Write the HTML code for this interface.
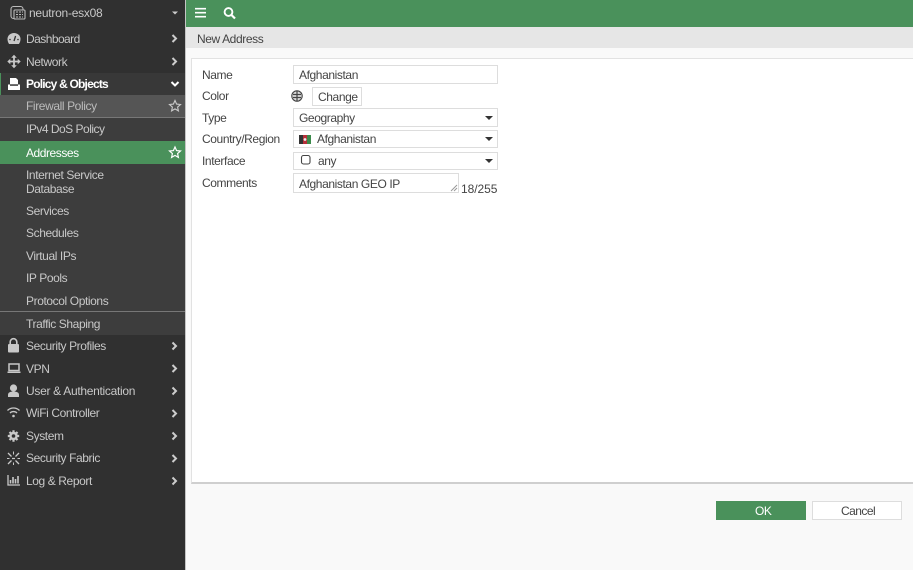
<!DOCTYPE html>
<html><head><meta charset="utf-8">
<style>
html,body{margin:0;padding:0;width:913px;height:570px;overflow:hidden;background:#f9f9f9;font-family:"Liberation Sans",sans-serif;font-size:12px;color:#444}
div,span,svg{position:absolute;box-sizing:border-box}
.t{white-space:nowrap;letter-spacing:-.4px}
#side{left:0;top:0;width:185px;height:570px;background:#303030}
.s{color:#c8c8c8;left:26px}
.b{background:#fff;border:1px solid #ddd;left:293px;width:205px;height:19px}
.l{left:202px;color:#444}
.v{color:#444}
.ar{left:485px;width:0;height:0;border-left:4.5px solid transparent;border-right:4.5px solid transparent;border-top:4.5px solid #333}
</style></head><body>
<div id="side">
<div style="left:0;top:95px;width:185px;height:240px;background:#3d3d3d"></div>
<div style="left:0;top:73px;width:185px;height:22px;background:#383838"></div>
<div style="left:0;top:73px;width:1px;height:22px;background:#4a915b"></div>
<div style="left:0;top:95px;width:185px;height:22px;background:#555"></div>
<div style="left:0;top:117px;width:185px;height:1px;background:#777"></div>
<div style="left:0;top:141px;width:185px;height:23px;background:#4a915b"></div>
<div style="left:0;top:311px;width:185px;height:1px;background:#777"></div>
<div class="t" style="left:29px;top:6px;color:#c8c8c8;line-height:14px;letter-spacing:-.25px">neutron-esx08</div>
<div class="t s" style="top:32px;letter-spacing:-.55px">Dashboard</div>
<div class="t s" style="top:55px">Network</div>
<div class="t s" style="top:77px;color:#fff;font-weight:bold;letter-spacing:-.8px">Policy &amp; Objects</div>
<div class="t s" style="top:99px;color:#bbb">Firewall Policy</div>
<div class="t s" style="top:122px;letter-spacing:-.5px">IPv4 DoS Policy</div>
<div class="t s" style="top:146px;color:#fff;letter-spacing:-.45px">Addresses</div>
<div class="t s" style="top:168px">Internet Service</div>
<div class="t s" style="top:182px">Database</div>
<div class="t s" style="top:204px">Services</div>
<div class="t s" style="top:226px">Schedules</div>
<div class="t s" style="top:249px">Virtual IPs</div>
<div class="t s" style="top:271px">IP Pools</div>
<div class="t s" style="top:294px">Protocol Options</div>
<div class="t s" style="top:317px">Traffic Shaping</div>
<div class="t s" style="top:339px">Security Profiles</div>
<div class="t s" style="top:362px">VPN</div>
<div class="t s" style="top:384px;letter-spacing:-.3px">User &amp; Authentication</div>
<div class="t s" style="top:406px">WiFi Controller</div>
<div class="t s" style="top:429px">System</div>
<div class="t s" style="top:451px">Security Fabric</div>
<div class="t s" style="top:474px">Log &amp; Report</div>
<svg style="left:0;top:0" width="185" height="500" viewBox="0 0 185 500">
<!-- device icon -->
<g fill="none" stroke="#bbb" stroke-width="1.100"><rect x="11" y="6.500" width="12" height="12" rx="2.500"/><rect x="14" y="10" width="11" height="9" rx="1" fill="#303030"/></g>
<path d="M16 12h7M16 14.500h7M16 17h7" stroke="#bbb" stroke-width="1" stroke-dasharray="2 1"/>
<path d="M172 11.500h6l-3 3z" fill="#ccc"/>
<!-- dashboard -->
<path d="M7.500 39a6.500 6 0 0 1 13 0c0 2-.6 3.500-1.600 5H9.100C8.100 42.500 7.500 41 7.500 39z" fill="#c8c8c8"/><path d="M14 41l1.600-5" stroke="#303030" stroke-width="1.300"/><circle cx="10" cy="39.500" r=".8" fill="#303030"/><circle cx="18" cy="39.500" r=".8" fill="#303030"/>
<!-- network -->
<path d="M14 56.500v10M9 61.500h10" stroke="#c8c8c8" stroke-width="1.800"/><path d="M14 54.800l2.800 3h-5.600zM14 68.200l2.800-3h-5.600zM7.300 61.500l3-2.800v5.600zM20.700 61.500l-3-2.800v5.600z" fill="#c8c8c8"/>
<!-- policy -->
<path d="M10 78h6l2 2v4h-8z" fill="#fff"/><path d="M8 84.500h12v5.500H8z" fill="#fff"/><path d="M10 85.300h8" stroke="#383838" stroke-width="1"/>
<!-- lock -->
<rect x="8" y="344" width="11" height="8.500" rx="1" fill="#c8c8c8"/><path d="M10.200 344v-2a3.300 3.300 0 0 1 6.600 0v2" fill="none" stroke="#c8c8c8" stroke-width="1.600"/>
<!-- vpn -->
<path d="M9 364h10v6.500H9z" fill="none" stroke="#c8c8c8" stroke-width="1.500"/><path d="M7.500 371.500h13v1.500h-13z" fill="#c8c8c8"/>
<!-- user -->
<circle cx="13.500" cy="388" r="3.600" fill="#c8c8c8"/><path d="M8 397v-2c0-2.500 2-3.500 5.500-3.500s5.500 1 5.500 3.500v2z" fill="#c8c8c8"/>
<!-- wifi -->
<path d="M7.500 410.500a8.500 8.500 0 0 1 12 0M10 413a5 5 0 0 1 7 0" fill="none" stroke="#c8c8c8" stroke-width="1.300"/><circle cx="13.500" cy="416" r="1.300" fill="#c8c8c8"/>
<!-- gear -->
<circle cx="13.500" cy="436" r="4.200" fill="#c8c8c8"/><path d="M13.500 430.300v11.400M7.800 436h11.400M9.500 432l8 8M17.500 432l-8 8" stroke="#c8c8c8" stroke-width="2.200"/><circle cx="13.500" cy="436" r="1.800" fill="#303030"/>
<!-- fabric -->
<path d="M8 453l3.500 3.500M19 453l-3.500 3.500M8 464l3.500-3.500M19 464l-3.500-3.500M12 458.500h3" stroke="#c8c8c8" stroke-width="1.300" fill="none"/><path d="M13.500 451.500v3M13.500 462.500v2.500M7 458.500h2.500M17.500 458.500h2.500" stroke="#c8c8c8" stroke-width="1"/>
<!-- log -->
<path d="M8 475v10h12" fill="none" stroke="#c8c8c8" stroke-width="1.300"/><path d="M10.500 480v3.500M13 477v6.500M15.500 479v4.500M18 476v7.500" stroke="#c8c8c8" stroke-width="1.600"/>
<!-- chevrons -->
<g fill="none" stroke="#ccc" stroke-width="2">
<path d="M172.500 35l3.500 3.500-3.500 3.500M172.500 58l3.500 3.500-3.500 3.500M172.500 342.500l3.500 3.500-3.500 3.500M172.500 365l3.500 3.500-3.500 3.500M172.500 387.500l3.500 3.500-3.500 3.500M172.500 410l3.500 3.500-3.500 3.500M172.500 432.500l3.500 3.500-3.500 3.500M172.500 455l3.500 3.500-3.500 3.500M172.500 477.500l3.500 3.500-3.500 3.500"/>
<path d="M171.500 82l3.500 3.500 3.500-3.500" stroke="#fff"/>
</g>
<!-- stars -->
<path d="M175 100.500l1.600 3.600 3.900.4-2.900 2.600.8 3.800-3.400-2-3.400 2 .8-3.800-2.900-2.600 3.900-.4z" fill="none" stroke="#ccc" stroke-width="1.100"/>
<path d="M175 147l1.600 3.600 3.900.4-2.900 2.600.8 3.800-3.400-2-3.400 2 .8-3.800-2.900-2.600 3.900-.4z" fill="none" stroke="#fff" stroke-width="1.200"/>
</svg>
</div>
<div style="left:185px;top:0;width:1px;height:570px;background:#c4c4c4"></div>
<!-- top bar -->
<div style="left:186px;top:0;width:727px;height:27px;background:#4a915b"></div>
<svg style="left:186px;top:0" width="60" height="27" viewBox="0 0 60 27">
<path d="M9 8.700h11M9 12.700h11M9 16.700h11" stroke="#fff" stroke-width="1.700"/>
<circle cx="42.500" cy="12" r="3.900" fill="none" stroke="#fff" stroke-width="1.900"/><path d="M45.500 15l3.500 3.500" stroke="#fff" stroke-width="2.200"/>
</svg>
<div style="left:186px;top:27px;width:727px;height:21px;background:#e6e6e6"></div>
<div class="t" style="left:197px;top:32px;color:#444">New Address</div>
<!-- panel -->
<div style="left:191px;top:58px;width:722px;height:426px;background:#fff;border-top:1px solid #e2e2e2;border-left:1px solid #e2e2e2;border-bottom:2px solid #cfcfcf"></div>
<div class="t l" style="top:68px">Name</div>
<div class="t l" style="top:89px">Color</div>
<div class="t l" style="top:111px">Type</div>
<div class="t l" style="top:132px">Country/Region</div>
<div class="t l" style="top:154px">Interface</div>
<div class="t l" style="top:176px">Comments</div>

<div class="b" style="top:65px"></div>
<div class="t v" style="left:299px;top:68px">Afghanistan</div>
<svg style="left:291px;top:90px" width="13" height="13" viewBox="0 0 13 13"><circle cx="6" cy="6" r="5.200" fill="#ddd" stroke="#444" stroke-width="1.100"/><path d="M2 4.500h8M2 7.500h8M6 1v10" stroke="#444" stroke-width="1.200"/></svg>
<div style="left:312px;top:87px;width:50px;height:19px;background:#fff;border:1px solid #ddd"></div>
<div class="t v" style="left:318px;top:90px">Change</div>
<div class="b" style="top:108px"></div>
<div class="t v" style="left:299px;top:111px">Geography</div>
<div class="ar" style="top:116px"></div>
<div class="b" style="top:130px;height:18px"></div>
<svg style="left:299px;top:135px" width="12" height="9"><rect width="4" height="9" fill="#333"/><rect x="4" width="4" height="9" fill="#b5303a"/><rect x="8" width="4" height="9" fill="#3a8a4a"/><circle cx="6" cy="4.500" r="1.400" fill="#eee"/></svg>
<div class="t v" style="left:317px;top:132px">Afghanistan</div>
<div class="ar" style="top:137px"></div>
<div class="b" style="top:152px;height:18px"></div>
<svg style="left:300px;top:154px" width="12" height="12"><rect x="1.500" y="1.500" width="8.500" height="8.500" rx="2" fill="none" stroke="#444" stroke-width="1.100"/></svg>
<div class="t v" style="left:318px;top:154px">any</div>
<div class="ar" style="top:159px"></div>
<div class="b" style="top:173px;width:166px;height:20px"></div>
<svg style="left:450px;top:184px" width="8" height="8"><path d="M1 7l6-6M4 7l3-3" stroke="#999" stroke-width="1"/></svg>
<div class="t v" style="left:299px;top:177px">Afghanistan GEO IP</div>
<div class="t v" style="left:461px;top:182px;letter-spacing:-.05px">18/255</div>
<!-- buttons -->
<div style="left:716px;top:501px;width:90px;height:19px;background:#4a915b"></div>
<div class="t" style="left:755px;top:504px;color:#fff">OK</div>
<div style="left:812px;top:501px;width:90px;height:19px;background:#fff;border:1px solid #ddd"></div>
<div class="t v" style="left:841px;top:504px;letter-spacing:-.55px">Cancel</div>
</body></html>
